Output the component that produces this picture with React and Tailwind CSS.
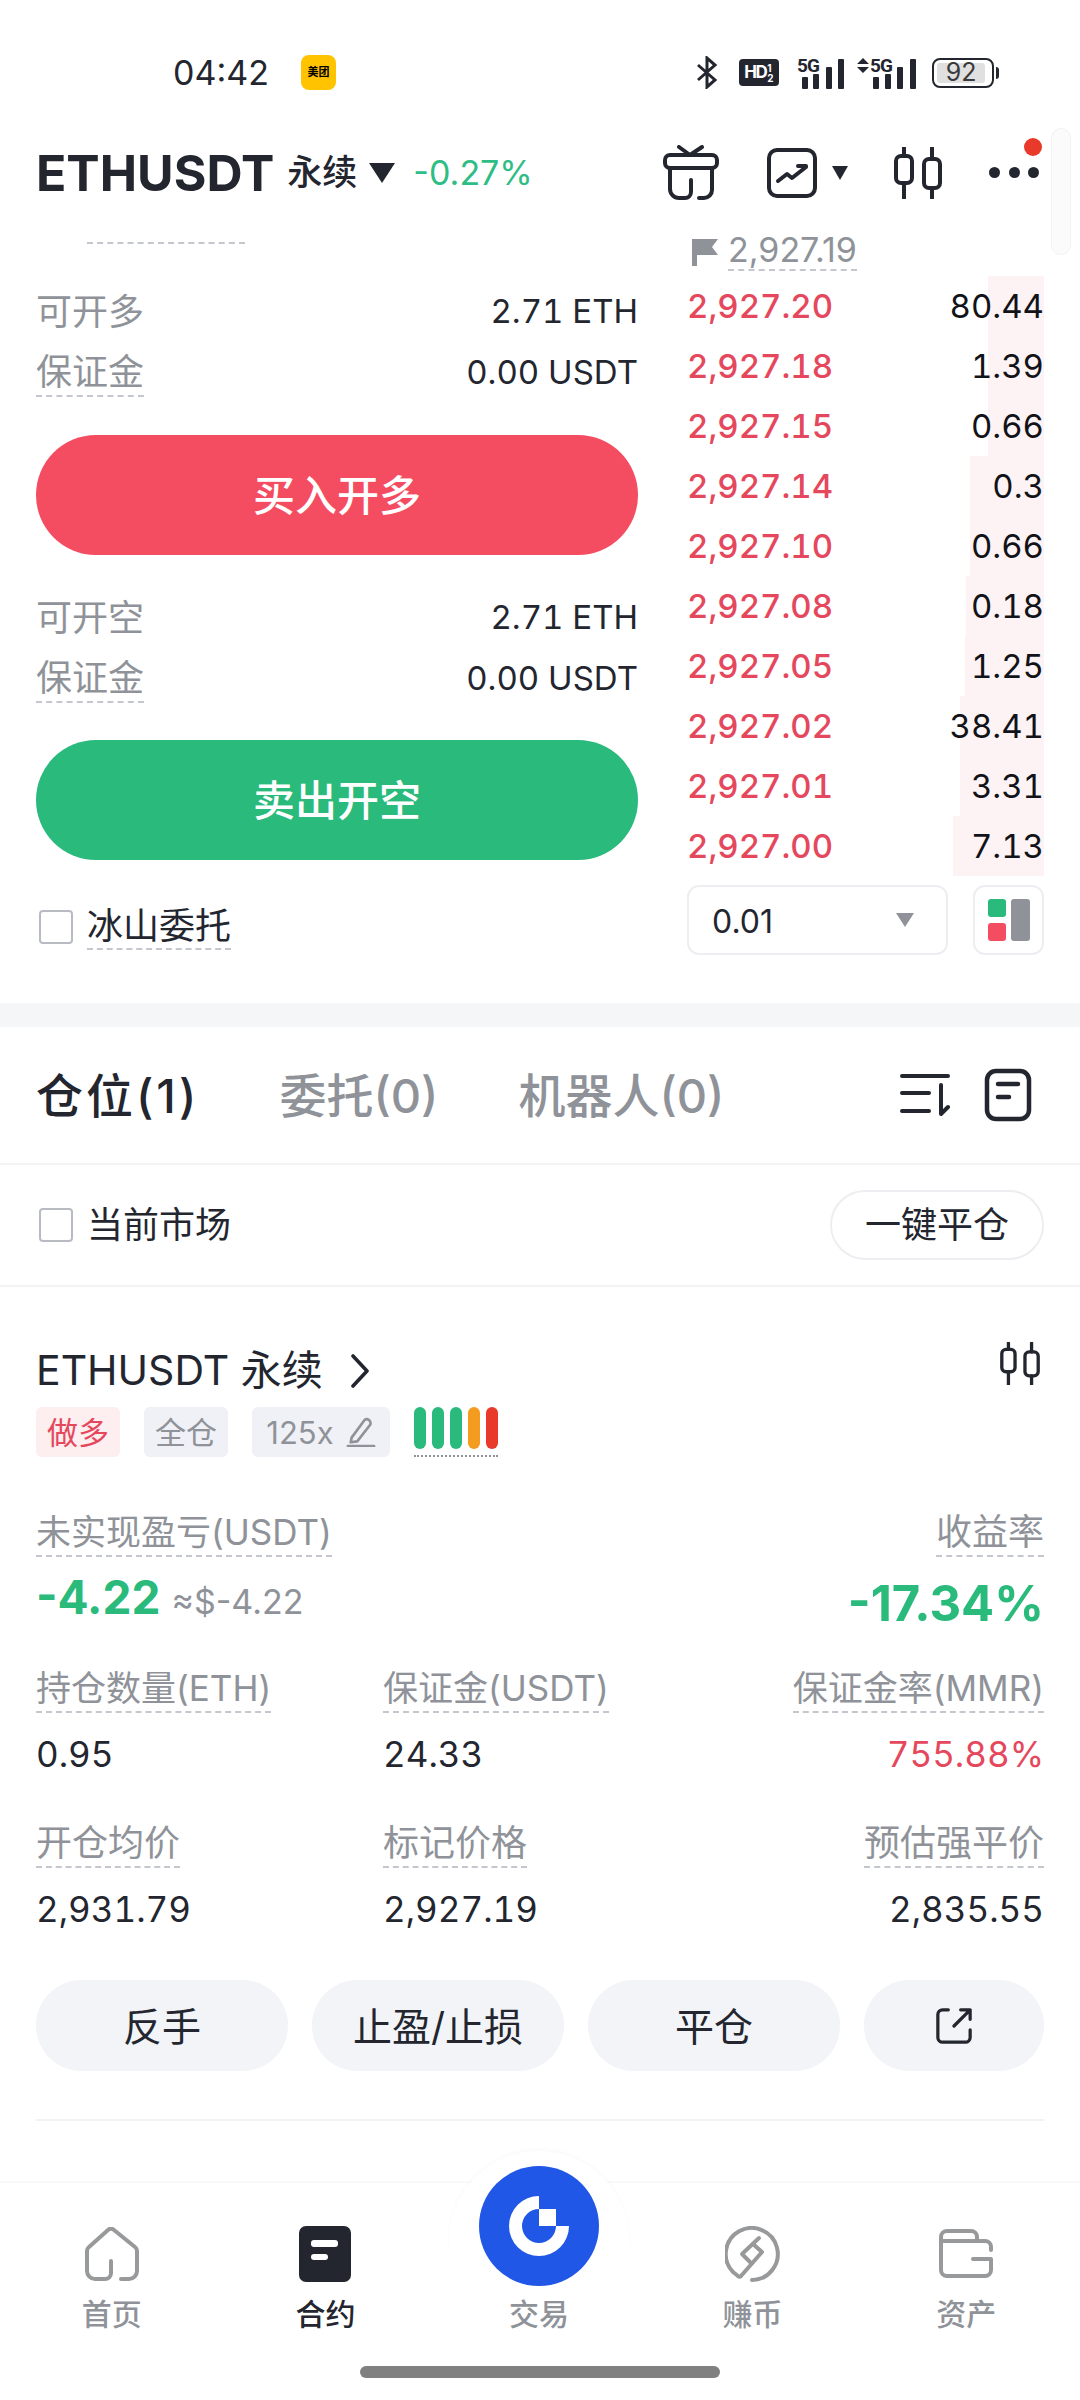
import React from "react";

const dash = "border-b-2 border-dashed border-[#c4c7ce]";

const asks = [
  { price: "2,927.20", qty: "80.44", bar: "w-[56px]" },
  { price: "2,927.18", qty: "1.39", bar: "w-[56px]" },
  { price: "2,927.15", qty: "0.66", bar: "w-[56px]" },
  { price: "2,927.14", qty: "0.3", bar: "w-[74px]" },
  { price: "2,927.10", qty: "0.66", bar: "w-[74px]" },
  { price: "2,927.08", qty: "0.18", bar: "w-[78px]" },
  { price: "2,927.05", qty: "1.25", bar: "w-[79px]" },
  { price: "2,927.02", qty: "38.41", bar: "w-[84px]" },
  { price: "2,927.01", qty: "3.31", bar: "w-[84px]" },
  { price: "2,927.00", qty: "7.13", bar: "w-[91px]" },
];

const Candles = ({ className }) => (
  <svg viewBox="0 0 48 52" className={className} fill="none" stroke="#23262f" strokeWidth="4" strokeLinecap="round" strokeLinejoin="round">
    <path d="M10 1v8M10 36v15M38 1v11M38 41v10" />
    <rect x="2" y="9" width="16" height="27" rx="5" />
    <rect x="30" y="12" width="16" height="29" rx="5" />
  </svg>
);

const Signal = ({ arrows }) => (
  <svg viewBox={arrows ? "0 0 60 32" : "0 0 48 32"} className={arrows ? "h-[32px] w-[60px]" : "h-[32px] w-[48px]"} fill="#23262f">
    {arrows && <path d="M0 7l6-6 6 6zM0 10h12l-6 6z" />}
    <text x={arrows ? 13 : 0} y="15" fontSize="19" fontWeight="700" fontFamily="Roboto" textLength="23">5G</text>
    <rect x={arrows ? 16 : 5} y="20" width="6" height="12" rx="1" />
    <rect x={arrows ? 28 : 16} y="17" width="6" height="15" rx="1" />
    <rect x={arrows ? 40 : 29} y="10" width="6" height="22" rx="1" />
    <rect x={arrows ? 53 : 41} y="2" width="6" height="30" rx="1" />
  </svg>
);

const StatusBar = () => (
  <div className="flex h-[115px] items-center justify-between pl-[173px] pr-[81px] pt-[30px] text-[#23262f]">
    <div className="flex items-center gap-[32px]">
      <span className="text-[34px] leading-none">04:42</span>
      <span className="flex h-[35px] w-[35px] items-center justify-center rounded-[8px] bg-[#ffc300] text-[11px] font-bold text-black">美团</span>
    </div>
    <div className="flex items-center">
      <svg viewBox="0 0 21 33" className="h-[33px] w-[21px]" fill="none" stroke="#23262f" strokeWidth="3">
        <path d="M1 9l17 15-8 7V2l8 7L1 24" />
      </svg>
      <span className="ml-[21px] flex h-[27px] w-[40px] items-center justify-center gap-[1px] rounded-[4px] bg-[#23262f] font-bold text-white">
        <span className="text-[17px] leading-none tracking-[-1.5px]">HD</span>
        <span className="flex flex-col text-[10px] leading-[10px]">
          <span>1</span>
          <span>2</span>
        </span>
      </span>
      <span className="ml-[18px]"><Signal /></span>
      <span className="ml-[12px]"><Signal arrows /></span>
      <div className="ml-[15px] flex items-center">
        <span className="flex h-[30px] w-[62px] items-center rounded-[8px] border-2 border-[#23262f] p-[3px]">
          <span className="flex h-full w-[48px] items-center justify-center rounded-[3px] bg-[#e0e0e0] text-[25px] leading-none text-[#3a3a3a]">92</span>
        </span>
        <span className="ml-[2px] h-[12px] w-[3px] rounded-r bg-[#23262f]" />
      </div>
    </div>
  </div>
);

const Header = () => (
  <div className="flex h-[115px] items-center justify-between pl-[36px] pr-[41px]">
    <div className="flex items-center">
      <span className="text-[50px] font-bold leading-none text-[#23262f]">ETHUSDT</span>
      <span className="ml-[13px] text-[35px] font-medium leading-none text-[#23262f]">永续</span>
      <svg viewBox="0 0 26 20" className="ml-[12px] h-[20px] w-[26px]" fill="#23262f">
        <path d="M0 0h26L13 20z" />
      </svg>
      <span className="ml-[18px] text-[34px] leading-none text-[#2ebd85]">-0.27%</span>
    </div>
    <div className="flex items-center">
      <svg viewBox="0 0 56 55" className="h-[55px] w-[56px]" fill="none" stroke="#23262f" strokeWidth="4" strokeLinecap="round" strokeLinejoin="round">
        <path d="M16 2l11 8 12-8" />
        <rect x="2" y="10" width="52" height="13" rx="5" />
        <path d="M7 23v21a9 9 0 0 0 9 9h6a6 6 0 0 0 6-6V35M49 23v22a8 8 0 0 1-8 8h-5" />
      </svg>
      <svg viewBox="0 0 50 50" className="ml-[48px] h-[50px] w-[50px]" fill="none" stroke="#23262f" strokeWidth="4" strokeLinecap="round" strokeLinejoin="round">
        <rect x="2" y="2" width="46" height="46" rx="8" />
        <path d="M11 33l9-7 5 4 14-11M31 18h8v1" />
      </svg>
      <svg viewBox="0 0 16 14" className="ml-[15px] h-[14px] w-[16px]" fill="#23262f">
        <path d="M0 0h16L8 14z" />
      </svg>
      <Candles className="ml-[46px] h-[52px] w-[48px]" />
      <div className="relative ml-[47px] flex items-center gap-[8.5px]">
        <span className="h-[11px] w-[11px] rounded-full bg-[#23262f]" />
        <span className="h-[11px] w-[11px] rounded-full bg-[#23262f]" />
        <span className="h-[11px] w-[11px] rounded-full bg-[#23262f]" />
        <span className="absolute right-[-3px] top-[-29px] h-[18px] w-[18px] rounded-full bg-[#e8392a]" />
      </div>
    </div>
  </div>
);

const FormRow = ({ label, value, dashed }) => (
  <div className="flex h-[61px] items-center justify-between">
    <span className={`text-[36px] leading-[46px] text-[#8f9399] ${dashed ? dash : ""}`}>{label}</span>
    <span className="text-[33px] leading-none text-[#23262f] tabular-nums">{value}</span>
  </div>
);

const TradeForm = () => (
  <div className="flex w-[602px] flex-col">
    <div className={`ml-[51px] h-[14px] w-[158px] ${dash}`} />
    <div className="mt-[37px]">
      <FormRow label="可开多" value="2.71 ETH" />
      <FormRow label="保证金" value="0.00 USDT" dashed />
    </div>
    <button className="mt-[32px] h-[120px] rounded-full bg-[#f44c60] text-[42px] font-medium text-white">买入开多</button>
    <div className="mt-[32px]">
      <FormRow label="可开空" value="2.71 ETH" />
      <FormRow label="保证金" value="0.00 USDT" dashed />
    </div>
    <button className="mt-[31px] h-[120px] rounded-full bg-[#29ba7c] text-[42px] font-medium text-white">卖出开空</button>
    <div className="mt-[44px] flex items-center">
      <span className="ml-[3px] h-[34px] w-[34px] rounded-[4px] border-2 border-[#b8bbc1]" />
      <span className={`ml-[14px] text-[36px] leading-[44px] text-[#23262f] ${dash}`}>冰山委托</span>
    </div>
  </div>
);

const OrderBook = () => (
  <div className="flex w-[357px] flex-col">
    <div className="mt-[6px] flex h-[40px] items-start overflow-hidden pl-[5px]">
      <svg viewBox="0 0 26 28" className="mt-[2px] h-[28px] w-[26px]" fill="#8f9399">
        <path d="M0 1h26l-6 8 6 8H5v11H0z" />
      </svg>
      <span className={`-mt-[6px] ml-[10px] text-[34px] leading-[39px] text-[#8f9399] ${dash}`}>2,927.19</span>
    </div>
    {asks.map((a) => (
      <div key={a.price} className="relative flex h-[60px] items-center justify-between">
        <span className={`absolute bottom-0 right-0 top-0 bg-[#fdf3f4] ${a.bar}`} />
        <span className="relative text-[33px] font-medium leading-none text-[#e5485d] tabular-nums">{a.price}</span>
        <span className="relative text-[33px] leading-none text-[#111318] tabular-nums">{a.qty}</span>
      </div>
    ))}
    <div className="mt-[9px] flex justify-between">
      <div className="flex h-[70px] w-[261px] items-center justify-between rounded-[12px] border-2 border-[#eceef1] pl-[23px] pr-[32px]">
        <span className="pt-[3px] text-[32px] leading-none text-[#23262f]">0.01</span>
        <svg viewBox="0 0 18 14" className="h-[14px] w-[18px]" fill="#8f9399">
          <path d="M0 0h18L9 14z" />
        </svg>
      </div>
      <div className="flex h-[70px] w-[71px] items-center justify-center rounded-[12px] border-2 border-[#eceef1]">
        <svg viewBox="0 0 42 42" className="h-[42px] w-[42px]">
          <rect x="0" y="0" width="18" height="18" rx="3" fill="#29ba7c" />
          <rect x="0" y="24" width="18" height="18" rx="3" fill="#f44c60" />
          <rect x="23" y="0" width="19" height="42" rx="3" fill="#8f9399" />
        </svg>
      </div>
    </div>
  </div>
);

const Tabs = () => (
  <div className="flex h-[138px] items-center justify-between border-b-2 border-[#f2f3f5] pl-[36px] pr-[48px]">
    <div className="flex items-center text-[47px] font-medium leading-none">
      <span className="tracking-[3px] text-[#23262f]">仓位(1)</span>
      <span className="ml-[80px] text-[#8f9399]">委托(0)</span>
      <span className="ml-[80px] text-[#8f9399]">机器人(0)</span>
    </div>
    <div className="flex items-center">
      <svg viewBox="0 0 50 42" className="h-[42px] w-[50px]" fill="none" stroke="#23262f" strokeWidth="4" strokeLinecap="round" strokeLinejoin="round">
        <path d="M2 2h46M2 19h27M2 37h27M41 11v29l7-7" />
      </svg>
      <svg viewBox="0 0 48 54" className="ml-[34px] h-[54px] w-[48px]" fill="none" stroke="#23262f" strokeWidth="4.5" strokeLinecap="round" strokeLinejoin="round">
        <rect x="3" y="3" width="42" height="48" rx="9" />
        <path d="M14 16h20M14 29h11" />
      </svg>
    </div>
  </div>
);

const FilterRow = () => (
  <div className="flex h-[122px] items-center justify-between border-b-2 border-[#f2f3f5] pl-[39px] pr-[36px]">
    <div className="flex items-center">
      <span className="h-[34px] w-[34px] rounded-[4px] border-2 border-[#b8bbc1]" />
      <span className="ml-[14px] text-[36px] leading-none text-[#23262f]">当前市场</span>
    </div>
    <span className="flex h-[70px] w-[214px] items-center justify-center rounded-full border-2 border-[#eceef1] text-[36px] leading-none text-[#23262f]">一键平仓</span>
  </div>
);

const Stat = ({ label, value, right, wide, valueClass = "text-[#23262f]" }) => (
  <div className={`flex flex-col ${right ? "items-end" : "items-start"}`}>
    <span className={`leading-[46px] text-[#8f9399] ${wide ? "text-[36px]" : "text-[35px]"} ${dash}`}>{label}</span>
    <span className={`mt-[23px] text-[35px] leading-[37px] tabular-nums ${valueClass}`}>{value}</span>
  </div>
);

const Position = () => (
  <div className="px-[36px] pt-[58px]">
    <div className="flex items-start justify-between">
      <div className="flex items-center pt-[5px] text-[41px] leading-none text-[#23262f]">
        <span>ETHUSDT 永续</span>
        <svg viewBox="0 0 18 34" className="ml-[28px] h-[34px] w-[18px]" fill="none" stroke="#23262f" strokeWidth="3.6" strokeLinecap="round" strokeLinejoin="round">
          <path d="M2 2l14 15L2 32" />
        </svg>
      </div>
      <Candles className="-mt-[3px] mr-[4px] h-[43px] w-[40px]" />
    </div>
    <div className="mt-[16px] flex items-start gap-[24px]">
      <span className="flex h-[50px] w-[84px] items-center justify-center rounded-[6px] bg-[#fdeef0] text-[31px] leading-none text-[#e5485d]">做多</span>
      <span className="flex h-[50px] w-[84px] items-center justify-center rounded-[6px] bg-[#eff1f6] text-[31px] leading-none text-[#8f9399]">全仓</span>
      <span className="flex h-[50px] w-[138px] items-center justify-center gap-[12px] rounded-[6px] bg-[#eff1f6] text-[31px] leading-none text-[#8f9399]">
        125x
        <svg viewBox="0 0 32 32" className="h-[30px] w-[30px]" fill="none" stroke="#8f9399" strokeWidth="2.8" strokeLinecap="round" strokeLinejoin="round">
          <path d="M6 22L20 3c3-2 7 1 6 5L12 26l-7 1zM2 31h28" />
        </svg>
      </span>
      <div className="flex h-[50px] w-[84px] flex-col justify-between border-b-2 border-dotted border-[#8f9399]">
        <div className="flex h-[42px] justify-between">
          <span className="w-[12px] rounded-full bg-[#29ba7c]" />
          <span className="w-[12px] rounded-full bg-[#29ba7c]" />
          <span className="w-[12px] rounded-full bg-[#29ba7c]" />
          <span className="w-[12px] rounded-full bg-[#f39c1f]" />
          <span className="w-[12px] rounded-full bg-[#e8392a]" />
        </div>
      </div>
    </div>
    <div className="mt-[52px] flex items-start justify-between">
      <div className="flex flex-col items-start">
        <span className={`text-[35px] leading-[46px] text-[#8f9399] ${dash}`}>未实现盈亏(USDT)</span>
        <div className="mt-[17px] flex items-end">
          <span className="text-[46px] font-bold leading-none text-[#29ba7c]">-4.22</span>
          <span className="ml-[11px] text-[34px] leading-[36px] text-[#8f9399]">≈$-4.22</span>
        </div>
      </div>
      <div className="flex flex-col items-end">
        <span className={`text-[36px] leading-[46px] text-[#8f9399] ${dash}`}>收益率</span>
        <span className="mt-[22px] text-[49px] font-bold leading-none text-[#29ba7c]">-17.34%</span>
      </div>
    </div>
    <div className="mt-[37px] grid grid-cols-[347px_1fr_auto] gap-y-[47px]">
      <Stat label="持仓数量(ETH)" value="0.95" />
      <Stat label="保证金(USDT)" value="24.33" />
      <Stat label="保证金率(MMR)" value="755.88%" right valueClass="text-[#e5485d]" />
      <Stat label="开仓均价" value="2,931.79" wide />
      <Stat label="标记价格" value="2,927.19" wide />
      <Stat label="预估强平价" value="2,835.55" right wide />
    </div>
    <div className="mt-[52px] flex gap-[24px]">
      {["反手", "止盈/止损", "平仓"].map((t) => (
        <button key={t} className="h-[91px] w-[252px] rounded-full bg-[#f2f4f7] pt-[3px] text-[39px] text-[#23262f]">{t}</button>
      ))}
      <button className="flex h-[91px] w-[180px] items-center justify-center rounded-full bg-[#f2f4f7]">
        <svg viewBox="0 0 40 40" className="h-[38px] w-[38px]" fill="none" stroke="#23262f" strokeWidth="3.4" strokeLinecap="round" strokeLinejoin="round">
          <path d="M14 3H8a5 5 0 0 0-5 5v24a5 5 0 0 0 5 5h24a5 5 0 0 0 5-5v-8M20 20L37 3M27 3h10v10" />
        </svg>
      </button>
    </div>
    <div className="mt-[48px] h-[2px] bg-[#f2f3f5]" />
  </div>
);

const NavItem = ({ label, active, children }) => (
  <div className="flex flex-col items-center">
    <div className="flex h-[60px] items-center justify-center">{children}</div>
    <span className={`mt-[15px] text-[30px] font-medium leading-none ${active ? "text-[#23262f]" : "text-[#8f9399]"}`}>{label}</span>
  </div>
);

const BottomNav = () => (
  <div className="relative mt-[60px] h-[218px] border-t-2 border-[#f8f9fa]">
    <div className="absolute left-[449px] top-[-32px] h-[100px] w-[180px] rounded-t-full bg-white shadow-[0_-2px_4px_rgba(0,0,0,0.025)]" />
    <div className="absolute left-[479px] top-[-17px] flex h-[120px] w-[120px] items-center justify-center rounded-full bg-[#2157e6]">
      <svg viewBox="0 0 60 60" className="h-[60px] w-[60px]" fill="#fff">
        <path d="M30 0v13a17 17 0 1 0 17 17h13A30 30 0 1 1 30 0z" />
        <path d="M30 13h17v17H30z" />
      </svg>
    </div>
    <div className="relative grid grid-cols-5 pl-[5px] pr-[7px] pt-[41px]">
      <NavItem label="首页">
        <svg viewBox="0 0 54 54" className="h-[54px] w-[54px]" fill="none" stroke="#98999b" strokeWidth="4" strokeLinejoin="round" strokeLinecap="round">
          <path d="M36 52h8a8 8 0 0 0 8-8V24a5 5 0 0 0-2-4L29 3a4 4 0 0 0-6 0L4 20a5 5 0 0 0-2 4v20a8 8 0 0 0 8 8h10a6 6 0 0 0 6-6V34" />
        </svg>
      </NavItem>
      <NavItem label="合约" active>
        <svg viewBox="0 0 52 56" className="h-[56px] w-[52px]">
          <rect width="52" height="56" rx="7" fill="#23262f" />
          <rect x="12" y="14" width="27" height="7" rx="3" fill="#fff" />
          <rect x="12" y="28" width="17" height="6" rx="3" fill="#fff" />
        </svg>
      </NavItem>
      <NavItem label="交易">
        <span className="h-[60px] w-[60px]" />
      </NavItem>
      <NavItem label="赚币">
        <svg viewBox="0 0 56 56" className="h-[56px] w-[56px]" fill="none" stroke="#98999b" strokeWidth="4" strokeLinecap="round" strokeLinejoin="round">
          <path d="M27 54A26 26 0 1 0 8 46l5 4c1 1 2 1 3 0L37 26l-9-8" />
          <path d="M34 12L17 28l9 9" />
        </svg>
      </NavItem>
      <NavItem label="资产">
        <svg viewBox="0 0 54 50" className="h-[50px] w-[54px]" fill="none" stroke="#98999b" strokeWidth="4" strokeLinecap="round" strokeLinejoin="round">
          <path d="M2 12h44a6 6 0 0 1 6 6v3M34 30h18v11a6 6 0 0 1-6 6H8a6 6 0 0 1-6-6V8a6 6 0 0 1 6-6h24a6 6 0 0 1 6 6v4" />
        </svg>
      </NavItem>
    </div>
    <div className="absolute left-[360px] top-[183px] h-[12px] w-[360px] rounded-full bg-[#808080]" />
  </div>
);

export default function App() {
  return (
    <div className="relative h-[2400px] w-[1080px] overflow-hidden bg-white [font-family:Inter,'Noto_Sans_CJK_SC',sans-serif]">
      <StatusBar />
      <Header />
      <div className="flex h-[773px] gap-[49px] pl-[36px] pr-[36px]">
        <TradeForm />
        <OrderBook />
      </div>
      <div className="h-[24px] bg-[#f5f6f8]" />
      <Tabs />
      <FilterRow />
      <Position />
      <BottomNav />
      <div className="absolute left-[1051px] top-[128px] h-[127px] w-[20px] rounded-full border border-[#f1f2f4] bg-[#fbfbfc]" />
    </div>
  );
}
